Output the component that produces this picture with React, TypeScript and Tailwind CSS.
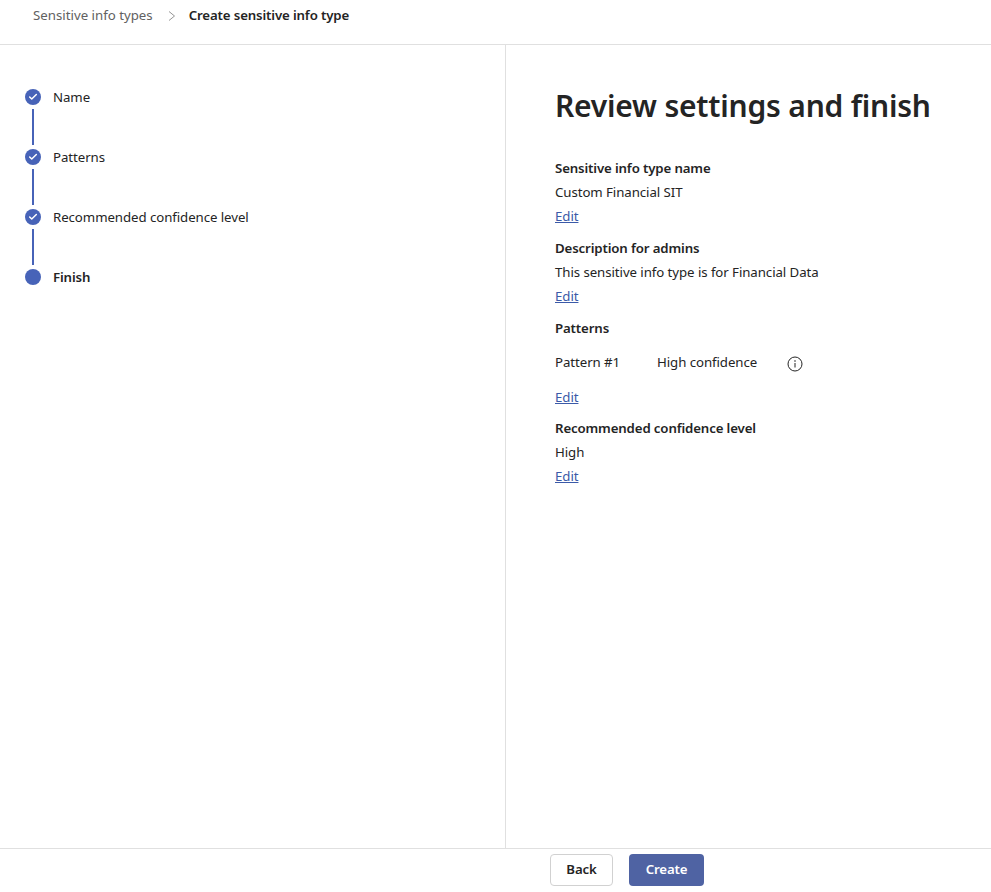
import { Check } from "lucide-react";

const steps = [
  { label: "Name", done: true },
  { label: "Patterns", done: true },
  { label: "Recommended confidence level", done: true },
  { label: "Finish", done: false },
];

const EditLink = () => (
  <a href="#" className="block h-6 leading-6 text-[#3b5aa8] underline">
    Edit
  </a>
);

const Section = ({ title, value }: { title: string; value: string }) => (
  <div className="mb-2">
    <h3 className="h-6 font-semibold leading-6 tracking-[-0.14px] text-[#242424]">{title}</h3>
    <p className="h-6 leading-6">{value}</p>
    <EditLink />
  </div>
);

const App = () => {
  return (
    <div className="flex h-[892px] w-[991px] flex-col overflow-hidden bg-white font-['Noto_Sans',sans-serif] text-[13.25px] tracking-[-0.07px] text-[#242424]">
      {/* Breadcrumb */}
      <header className="flex h-[45px] shrink-0 items-start border-b border-[#e0e0e0] pl-[33px] pt-[3px]">
        <span className="h-6 leading-6 tracking-normal text-[#616161]">Sensitive info types</span>
        <svg className="ml-[15px] mr-[13px] mt-[8px]" width="8" height="10" viewBox="0 0 8 10" fill="none">
          <path d="M1 0.5L6.5 5L1 9.5" stroke="#8a8a8a" strokeWidth="0.9" />
        </svg>
        <span className="h-6 font-semibold leading-6 tracking-[-0.14px]">Create sensitive info type</span>
      </header>

      <div className="flex min-h-0 flex-1">
        {/* Stepper */}
        <nav className="w-[506px] shrink-0 border-r border-[#e0e0e0] pl-[25px] pt-[44px]">
          {steps.map((step, index) => (
            <div key={step.label} className="flex h-[60px] gap-3">
              <div className="flex w-4 flex-col items-center">
                <span className="flex size-4 shrink-0 items-center justify-center rounded-full bg-[#4763b8]">
                  {step.done && <Check size={10} strokeWidth={3.5} className="text-white" />}
                </span>
                {index < steps.length - 1 && <span className="mt-1 h-9 w-0.5 bg-[#4763b8]" />}
              </div>
              <span className={`-mt-1 h-6 leading-6 ${step.done ? "" : "font-semibold tracking-[-0.14px]"}`}>
                {step.label}
              </span>
            </div>
          ))}
        </nav>

        {/* Review */}
        <main className="flex-1 pl-[49px] pt-[36px]">
          <h1 className="mb-[25px] h-[50px] text-[30px] font-semibold leading-[50px] tracking-[-0.2px] whitespace-nowrap text-[#242424]">
            Review settings and finish
          </h1>
          <Section title="Sensitive info type name" value="Custom Financial SIT" />
          <Section title="Description for admins" value="This sensitive info type is for Financial Data" />
          <div className="mb-[7px]">
            <h3 className="h-6 font-semibold leading-6 tracking-[-0.14px]">Patterns</h3>
            <div className="mt-[10px] flex h-6 items-center leading-6">
              <span className="w-[102px]">Pattern #1</span>
              <span className="w-[130px]">High confidence</span>
              <svg width="16" height="16" viewBox="0 0 16 16" fill="none" className="mt-[3px]">
                <circle cx="8" cy="8" r="7" stroke="#242424" strokeWidth="1" />
                <circle cx="8" cy="5" r="0.8" fill="#242424" />
                <path d="M8 7v4.5" stroke="#242424" strokeWidth="1" />
              </svg>
            </div>
            <div className="mt-[11px]">
              <EditLink />
            </div>
          </div>
          <Section title="Recommended confidence level" value="High" />
        </main>
      </div>

      {/* Footer */}
      <footer className="flex h-[44px] shrink-0 items-start border-t border-[#e0e0e0] pl-[550px] pt-[5px]">
        <button className="h-8 w-[63px] rounded border border-[#d1d1d1] bg-white font-semibold tracking-[-0.14px] text-[#242424]">
          Back
        </button>
        <button className="ml-4 h-8 w-[75px] rounded bg-[#4f63a3] font-semibold tracking-[-0.14px] text-white">
          Create
        </button>
      </footer>
    </div>
  );
};

export default App;
